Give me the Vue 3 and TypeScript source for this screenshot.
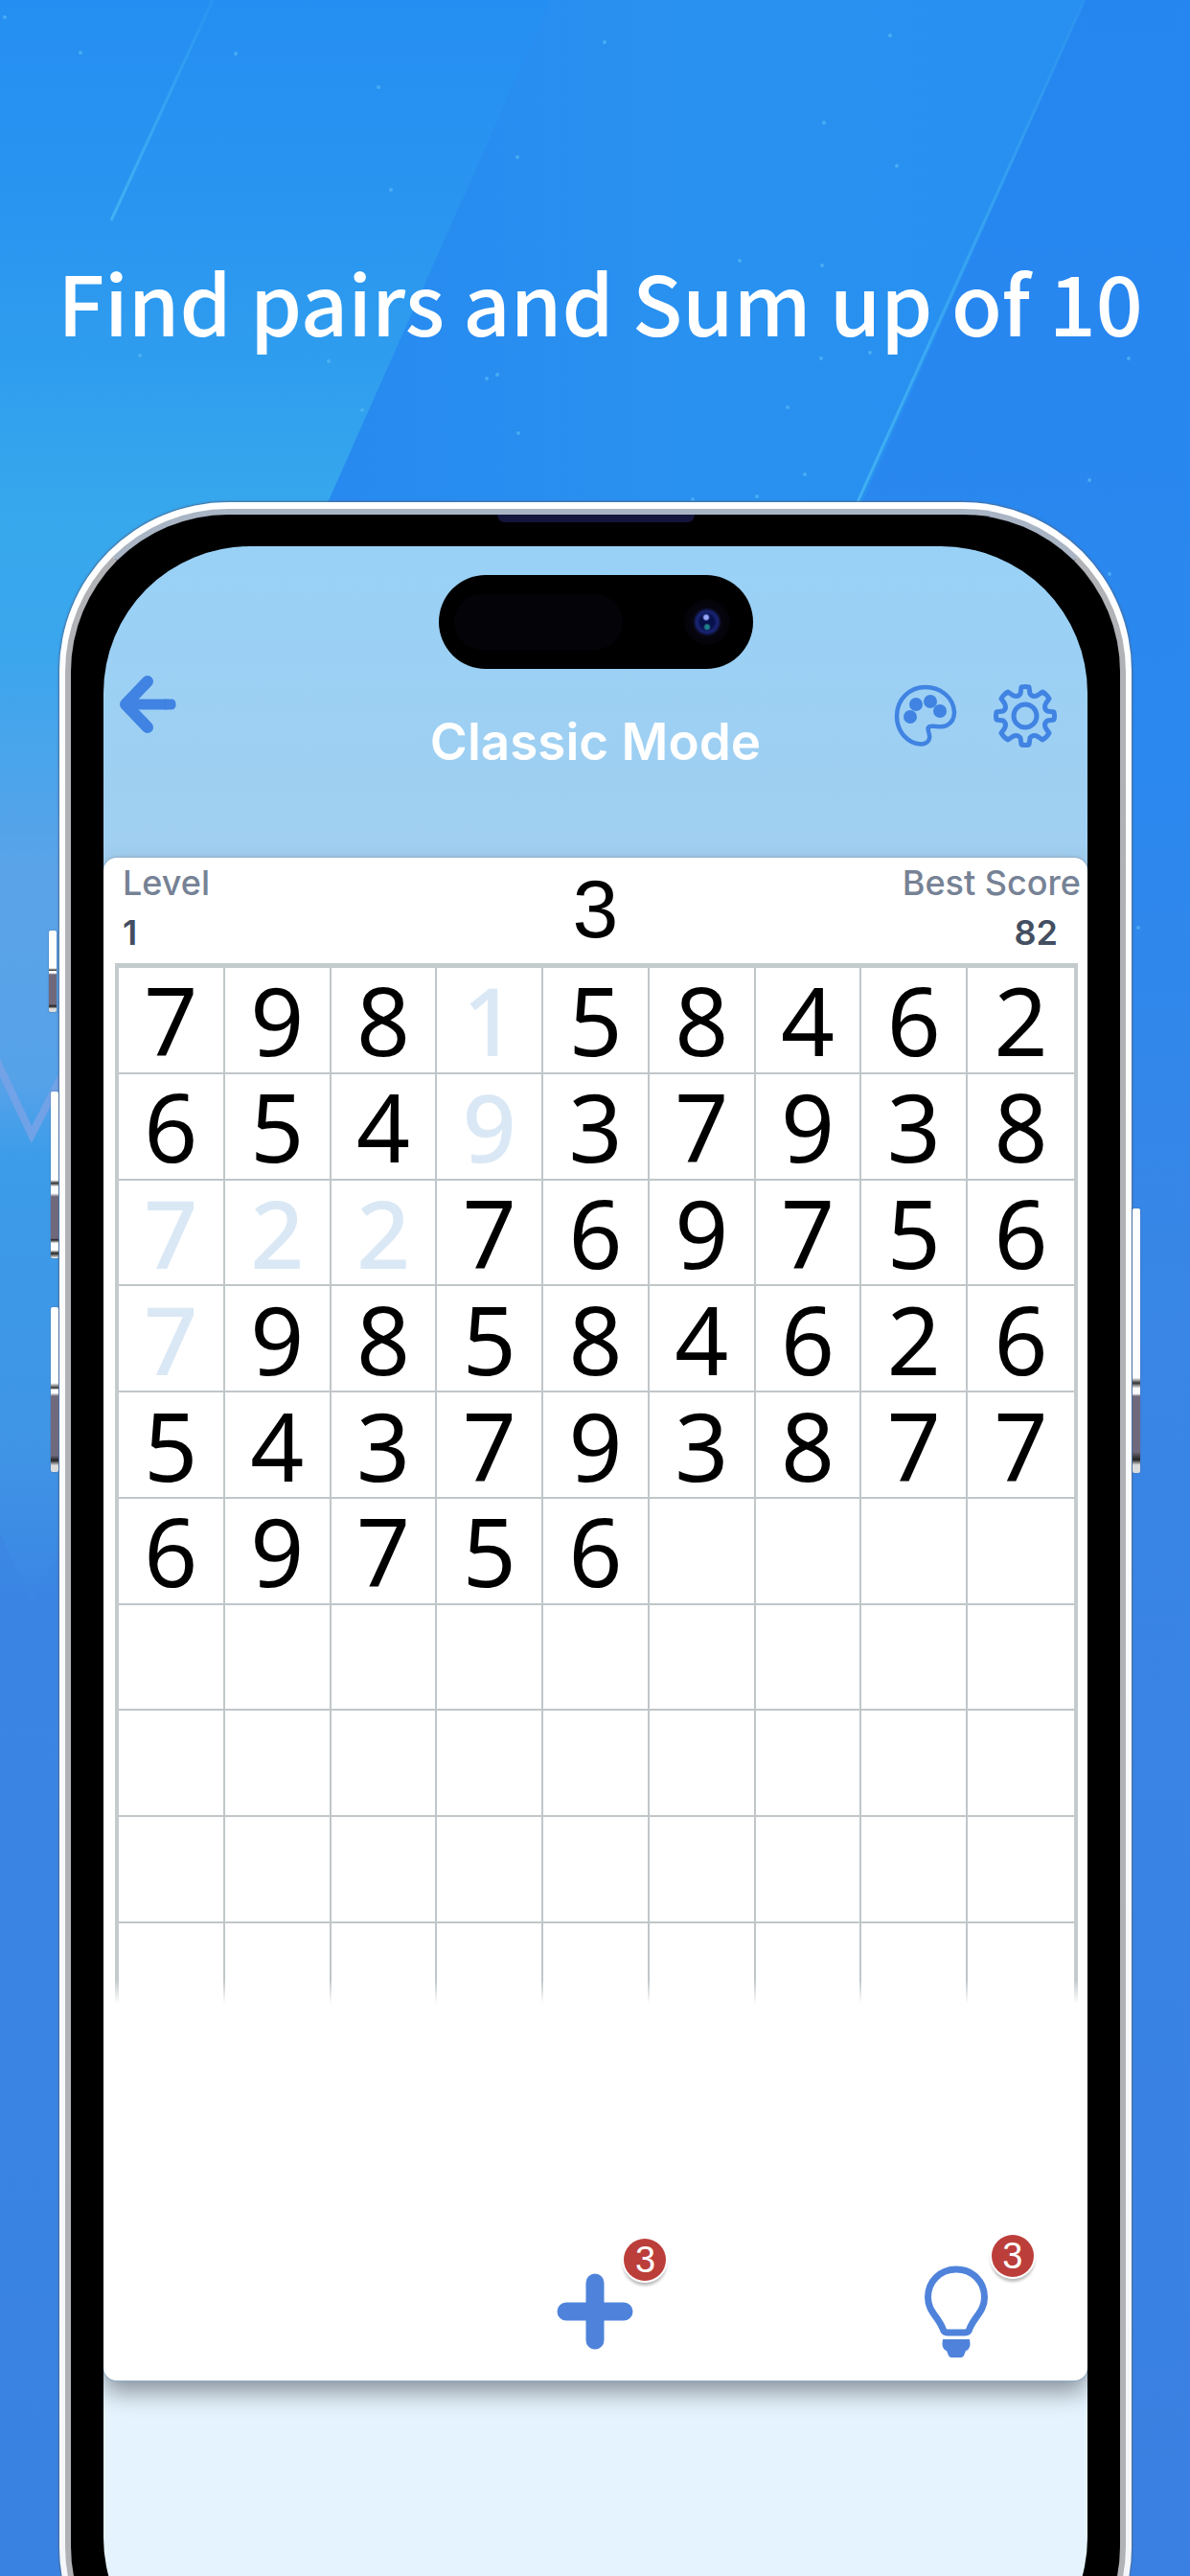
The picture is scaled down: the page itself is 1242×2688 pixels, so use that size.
<script setup lang="ts">
interface Cell {
  value: number | null
  cleared: boolean
}

const COLUMNS = 9
const ROWS = 10

const digits: string = '798158462' + '654937938' + '722769756' + '798584626' + '543793877' + '69756'
const cleared = new Set<number>([3, 12, 18, 19, 20, 27])

const cells: Cell[] = Array.from({ length: COLUMNS * ROWS }, (_, i) => ({
  value: i < digits.length ? Number(digits[i]) : null,
  cleared: cleared.has(i),
}))

const stars: [number, number][] = [
  [5, 18], [84, 55], [246, 56], [395, 91], [631, 44], [929, 37], [860, 128], [540, 164], [936, 173],
  [772, 272], [858, 277], [408, 198], [146, 371], [343, 377], [508, 395], [519, 391], [857, 374],
  [908, 368], [822, 425], [541, 452], [840, 495], [790, 518], [723, 521], [1137, 501], [1178, 374],
  [1158, 599], [1188, 968], [378, 428],
]
</script>

<template>
  <main class="stage">
    <svg class="backdrop" viewBox="0 0 1242 2688" preserveAspectRatio="none" aria-hidden="true">
      <defs>
        <linearGradient id="left" x1="0" y1="0" x2="0" y2="1">
          <stop offset="0" stop-color="#258ef2" />
          <stop offset="0.09" stop-color="#2a96f0" />
          <stop offset="0.14" stop-color="#2f9dee" />
          <stop offset="0.2" stop-color="#37a8ed" />
          <stop offset="0.25" stop-color="#3aa6ed" />
          <stop offset="0.34" stop-color="#5ba3e9" />
          <stop offset="0.42" stop-color="#56a2e9" />
          <stop offset="0.45" stop-color="#3b9ce9" />
          <stop offset="0.56" stop-color="#4095e6" />
          <stop offset="0.62" stop-color="#3a86e3" />
          <stop offset="1" stop-color="#3a82e2" />
        </linearGradient>
        <linearGradient id="mid" x1="0" y1="0" x2="1" y2="0">
          <stop offset="0" stop-color="#2788f0" />
          <stop offset="0.45" stop-color="#2991ef" />
          <stop offset="1" stop-color="#278ff0" />
        </linearGradient>
        <linearGradient id="right" x1="0" y1="0" x2="0" y2="1">
          <stop offset="0" stop-color="#2586f0" />
          <stop offset="0.3" stop-color="#2b88ee" />
          <stop offset="0.5" stop-color="#3886e6" />
          <stop offset="1" stop-color="#3a80e2" />
        </linearGradient>
        <linearGradient id="ray" x1="0" y1="0" x2="0" y2="1">
          <stop offset="0" stop-color="#43b4f4" stop-opacity="0.15" />
          <stop offset="1" stop-color="#43b4f4" stop-opacity="0.9" />
        </linearGradient>
      </defs>
      <rect width="1242" height="2688" fill="url(#left)" />
      <path d="M575 0H1242V700H264z" fill="url(#mid)" />
      <path d="M1132 0H1242V2688H900V524z" fill="url(#right)" />
      <path d="M222 0L116 230" stroke="url(#ray)" stroke-width="3" />
      <path d="M1132 0L895 524" stroke="url(#ray)" stroke-width="3" />
      <path d="M-4 1106L33 1184L70 1112" fill="none" stroke="#7aa3e6" stroke-opacity="0.8" stroke-width="8" />
      <path d="M0 1600L33 1672L64 1616V1800H0z" fill="#3a85e2" fill-opacity="0.6" />
      <ellipse v-for="(s, i) in stars" :key="i" :cx="s[0]" :cy="s[1]" rx="2" ry="2" fill="#55b8f5" fill-opacity="0.7" />
    </svg>

    <h1 class="headline">Find pairs and Sum up of 10</h1>

    <div class="phone">
      <i class="key key-mute"></i>
      <i class="key key-up"></i>
      <i class="key key-down"></i>
      <i class="key key-power"></i>
      <div class="bezel">
        <i class="speaker"></i>
        <div class="screen">
          <div class="island"><i class="sensor"></i><i class="lens"></i></div>

          <header class="topbar">
            <button class="icon-button back" type="button" aria-label="Back">
              <svg width="60" height="60" viewBox="0 0 60 60" fill="none" stroke="#4083e2" stroke-width="12" stroke-linecap="round" stroke-linejoin="round">
                <path d="M30 6L7 30L30 54" />
                <path d="M10 30H50" stroke-width="11" stroke-linecap="butt" />
                <rect x="46" y="26" width="12" height="8" rx="3" stroke-width="3" fill="#4083e2" />
              </svg>
            </button>
            <h2 class="title">Classic Mode</h2>
            <div class="tools">
              <button class="icon-button" type="button" aria-label="Theme">
                <svg width="66" height="66" viewBox="0 0 66 66">
                  <path d="M33 3C16 3 3 16 3 33C3 49 14 62 28 62.500C35 62.500 38 58 37 53C36 48 34 45 38 44C43 43 49 46 55 43C61 40 63 34 63 29C62 14 49 3 33 3z" fill="none" stroke="#4083e2" stroke-width="4.500" stroke-linejoin="round" />
                  <g fill="#4083e2">
                    <circle cx="17" cy="34" r="7" />
                    <circle cx="23" cy="21" r="7" />
                    <circle cx="38" cy="18" r="7" />
                    <circle cx="48" cy="28" r="7" />
                  </g>
                </svg>
              </button>
              <button class="icon-button" type="button" aria-label="Settings">
                <svg width="66" height="66" viewBox="0 0 66 66" fill="none" stroke="#4083e2" stroke-width="5" stroke-linejoin="round">
                  <path d="M28 10L29 3Q33 2 37 3L38 10Q41 14 46 11.500L51 8Q55 10 58 15L54.500 20Q52 25 56 28L63 29Q64 33 63 37L56 38Q52 41 54.500 46L58 51Q55 56 51 58L46 54.500Q41 52 38 56L37 63Q33 64 29 63L28 56Q25 52 20 54.500L15 58Q11 56 8 51L11.500 46Q14 41 10 38L3 37Q2 33 3 29L10 28Q14 25 11.500 20L8 15Q11 10 15 8L20 11.500Q25 14 28 10z" />
                  <circle cx="33" cy="33" r="12" />
                </svg>
              </button>
            </div>
          </header>

          <section class="card">
            <div class="scores">
              <div class="score">
                <span class="label">Level</span>
                <span class="value">1</span>
              </div>
              <output class="current">3</output>
              <div class="score score-best">
                <span class="label">Best Score</span>
                <span class="value">82</span>
              </div>
            </div>

            <div class="board">
              <button v-for="(cell, i) in cells" :key="i" type="button" class="cell" :class="{ cleared: cell.cleared }">{{ cell.value ?? '' }}</button>
            </div>

            <div class="actions">
              <button class="action" type="button" aria-label="Add numbers">
                <svg width="80" height="80" viewBox="0 0 80 80" stroke="#4f83db" stroke-width="19" stroke-linecap="round">
                  <path d="M40 10V70M10 40H70" />
                </svg>
                <span class="badge">3</span>
              </button>
              <button class="action action-hint" type="button" aria-label="Hint">
                <svg width="66" height="96" viewBox="0 0 66 96">
                  <path d="M33 4C16 4 3.500 17 3.500 33C3.500 48 14 53 19 66Q20 70 24 70H42Q46 70 47 66C52 53 62.500 48 62.500 33C62.500 17 50 4 33 4z" fill="none" stroke="#4f83db" stroke-width="7" stroke-linejoin="round" />
                  <path d="M19 77H47Q49 87 43 89L41 94Q40 96 38 96H28Q26 96 25 94L23 89Q17 87 19 77z" fill="#4f83db" />
                </svg>
                <span class="badge">3</span>
              </button>
            </div>
          </section>
        </div>
      </div>
    </div>
  </main>
</template>

<style>
body {
  margin: 0;
}
</style>

<style scoped>
.stage {
  position: relative;
  box-sizing: border-box;
  min-height: 100vh;
  padding: 254px 61px 0 62px;
  overflow: hidden;
  background: #3a82e2;
  font-family: Inter, 'Liberation Sans', sans-serif;
}

.backdrop {
  position: absolute;
  inset: 0;
  width: 100%;
  height: 100%;
}

.headline {
  position: relative;
  margin: 0 -32px 150px -22px;
  color: #fff;
  font: 500 86px/120px 'Noto Sans CJK SC', 'Noto Sans', sans-serif;
  text-align: center;
  white-space: nowrap;
}

.phone {
  position: relative;
  box-sizing: border-box;
  height: 2310px;
  margin-bottom: -146px;
  padding: 7px 6px;
  border-radius: 176px;
  background: linear-gradient(#fff, #f4f6f8);
  box-shadow: 0 0 2px 1px #4d6d96;
}

.bezel {
  position: relative;
  box-sizing: border-box;
  height: 100%;
  padding: 33px 34px 20px;
  border: 6px solid #a9b4c4;
  border-color: #a9b4c4 #b0b2b6;
  border-radius: 170px;
  background: #000;
}

.speaker {
  position: absolute;
  top: 0;
  left: 50%;
  width: 206px;
  height: 8px;
  border-radius: 0 0 8px 8px;
  background: #14153c;
  transform: translateX(-50%);
}

.screen {
  box-sizing: border-box;
  height: 100%;
  overflow: hidden;
  border-radius: 153px;
  background: linear-gradient(#99d1f6 0, #a0cff1 320px, #e4f3fd 1400px);
}

.island {
  display: flex;
  align-items: center;
  justify-content: space-between;
  box-sizing: border-box;
  width: 328px;
  height: 98px;
  margin: 30px auto 0;
  padding: 0 24px 0 16px;
  border-radius: 49px;
  background: #000;
}

.sensor {
  width: 176px;
  height: 58px;
  border-radius: 29px;
  background: #030308;
}

.lens {
  width: 48px;
  height: 48px;
  border-radius: 50%;
  background: radial-gradient(circle at 48% 40%, #98a8ff 0 2px, transparent 4px),
    radial-gradient(circle at 50% 61%, #1f7f8c 0 2px, transparent 4px),
    radial-gradient(circle, #07104a 0 7px, #1a2678 11px, #101542 13px, #07050f 15px, #030308 24px);
}

.topbar {
  display: grid;
  grid-template-columns: 1fr auto 1fr;
  align-items: start;
  height: 197px;
  padding: 0 16px;
}

.icon-button {
  display: block;
  padding: 0;
  border: 0;
  background: none;
}

.icon-button svg {
  display: block;
}

.back {
  justify-self: start;
  margin-top: 7px;
}

.title {
  margin: 44px 0 0;
  color: #fff;
  font-size: 53px;
  font-weight: 600;
  line-height: 64px;
}

.tools {
  display: flex;
  justify-content: flex-end;
  gap: 38px;
  margin: 16px 16px 0 0;
}

.card {
  border-radius: 14px;
  background: #fff;
  box-shadow: 0 0 2px 1px #8fadc8, 0 12px 24px #8a929c;
}

.scores {
  display: grid;
  grid-template-columns: 1fr auto 1fr;
  height: 110px;
  padding: 0 7px;
}

.score {
  display: flex;
  flex-direction: column;
  padding-left: 13px;
  font-size: 36px;
  line-height: 52px;
}

.score-best {
  align-items: flex-end;
}

.score-best .value {
  margin-right: 24px;
}

.label {
  color: #768295;
  font-weight: 500;
}

.value {
  color: #434e61;
  font-weight: 600;
}

.current {
  color: #000;
  font: 400 86px/106px 'Liberation Sans', Arial, sans-serif;
}

.board {
  position: relative;
  display: grid;
  grid-template-columns: repeat(9, 1fr);
  margin: 0 10px 0 12px;
  border: solid #c4cbcd;
  border-width: 5px 4px 0;
}

.board::after {
  content: '';
  position: absolute;
  right: -4px;
  bottom: 0;
  left: -4px;
  height: 25px;
  background: linear-gradient(#fff0, #fff);
}

.cell {
  aspect-ratio: 1;
  min-width: 0;
  padding: 0;
  border: solid #c0c6c9;
  border-width: 0 2px 2px 0;
  background: none;
  color: #000;
  font: 400 98px/108px 'Noto Sans', sans-serif;
}

.cell:nth-child(9n) {
  border-right: 0;
}

.cell:nth-child(n + 82) {
  aspect-ratio: auto;
  height: 84px;
  border-bottom: 0;
}

.cleared {
  color: #dae8f5;
  font-weight: 500;
}

.actions {
  display: grid;
  grid-template-columns: 1fr 1fr 1fr;
  align-items: end;
  justify-items: center;
  height: 393px;
  box-sizing: border-box;
  padding-bottom: 24px;
}

.action {
  position: relative;
  grid-column: 2;
  padding: 0;
  border: 0;
  background: none;
}

.action svg {
  display: block;
}

.action:first-child {
  margin-bottom: 8px;
}

.action-hint {
  grid-column: 3;
  margin-left: 68px;
}

.badge {
  position: absolute;
  bottom: 72px;
  left: 70px;
  width: 44px;
  height: 44px;
  border-radius: 50%;
  background: #bc3e3a;
  box-shadow: 0 0 0 2px #fff, 0 4px 3px 1px #bdbdbd;
  color: #fff;
  font: 400 38px/44px 'Liberation Sans', sans-serif;
}

.action-hint .badge {
  bottom: 84px;
}

.key {
  position: absolute;
  left: -9px;
  width: 8px;
  border-radius: 2px;
  background: linear-gradient(#fff 0 46%, #333 49%, #fff 50% 52%, #70697c 54% 90%, #222 93%, #ddd 96%);
  box-shadow: 0 0 2px #51709a;
}

.key-mute {
  top: 447px;
  left: -11px;
  height: 85px;
}

.key-up {
  top: 615px;
  height: 174px;
  background: linear-gradient(#fff 0 53%, #333 55%, #fff 57% 61%, #70697c 63% 88%, #222 89%, #fff 91% 95%, #222 97%, #fff);
}

.key-down {
  top: 840px;
  height: 172px;
}

.key-power {
  top: 737px;
  right: -9px;
  left: auto;
  height: 276px;
  background: linear-gradient(#fff 0 64%, #333 66%, #fff 68% 70%, #70697c 71% 92%, #222 95%, #ddd 97%);
}
</style>
